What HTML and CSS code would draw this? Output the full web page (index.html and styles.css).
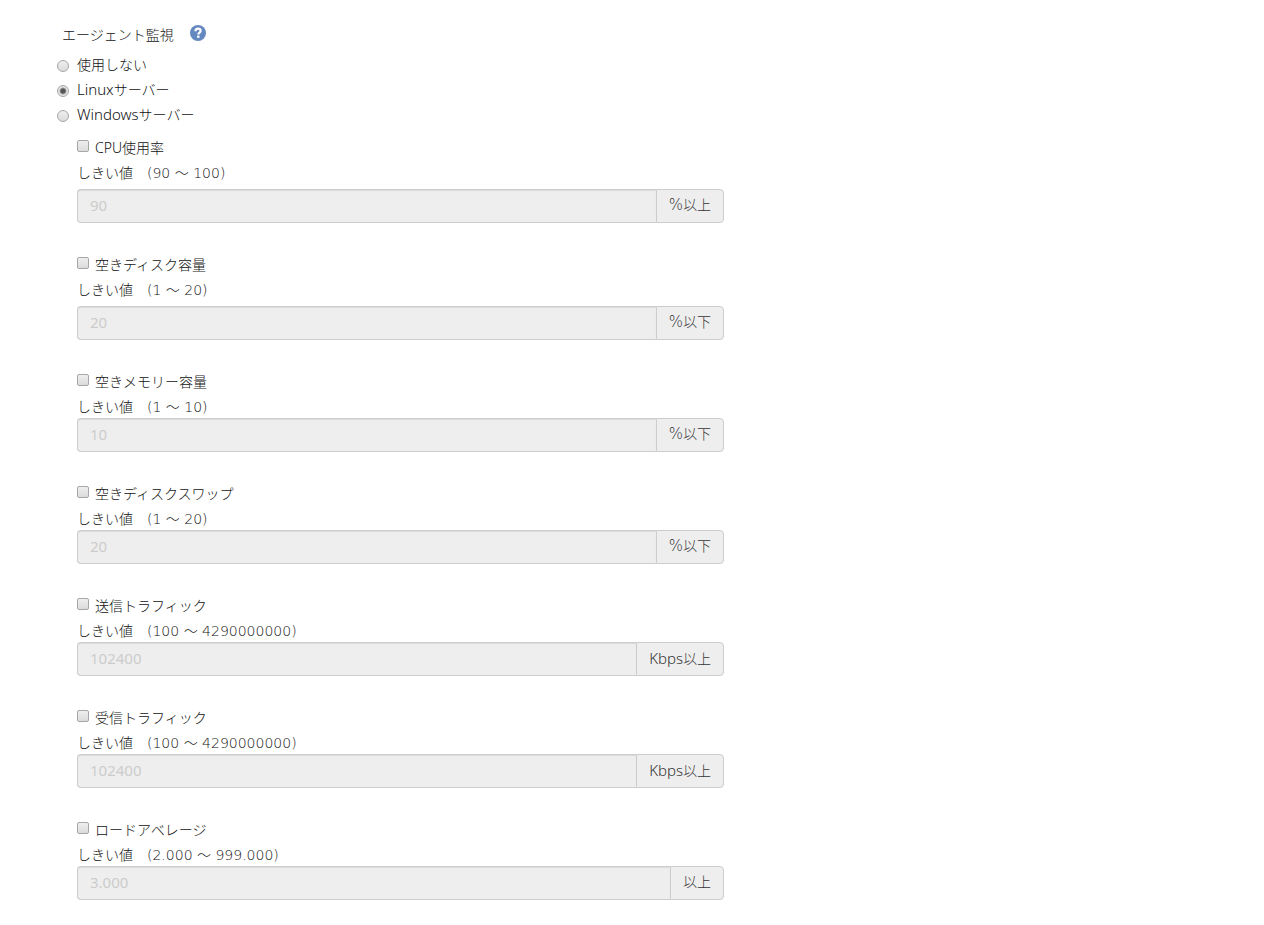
FILE: index.html
```
<!DOCTYPE html>
<html lang="ja">
<head>
    <meta charset="UTF-8">
    <meta name="viewport" content="width=device-width, initial-scale=1.0">
    <title>エージェント監視</title>
    <link rel="stylesheet" href="styles.css">
</head>
<body>
    <form class="agent-form">
        <div class="form-title">
            <span id="agent-title">エージェント監視</span>
            <a href="#help" class="help" aria-label="ヘルプ">
                <svg viewBox="0 0 16 16" width="16" height="16">
                    <circle cx="8" cy="8" r="8" fill="#6488c0"/>
                    <path d="M5.5 6.2C5.5 4.5 6.6 3.7 8.1 3.7S10.6 4.6 10.6 5.9C10.6 7.7 8.3 7.5 8.3 9.6" fill="none" stroke="#fff" stroke-width="2.2"/>
                    <rect x="7.1" y="10.6" width="2.4" height="2.2" fill="#fff"/>
                </svg>
            </a>
        </div>

        <div class="radio-list" role="radiogroup" aria-labelledby="agent-title">
            <label class="radio"><input type="radio" name="agent" value="none">使用しない</label>
            <label class="radio"><input type="radio" name="agent" value="linux" checked><span><span class="en">Linux</span>サーバー</span></label>
            <label class="radio"><input type="radio" name="agent" value="windows"><span><span class="en">Windows</span>サーバー</span></label>
        </div>

        <div class="monitor-list">
            <div class="monitor spaced">
                <label class="check"><input type="checkbox" name="cpu">CPU使用率</label>
                <label class="range" for="cpu-value">しきい値　(90 〜 100)</label>
                <div class="input-group">
                    <input type="text" id="cpu-value" value="90" disabled>
                    <span class="addon"><span class="percent">%</span>以上</span>
                </div>
            </div>

            <div class="monitor spaced">
                <label class="check"><input type="checkbox" name="disk">空きディスク容量</label>
                <label class="range" for="disk-value">しきい値　(1 〜 20)</label>
                <div class="input-group">
                    <input type="text" id="disk-value" value="20" disabled>
                    <span class="addon"><span class="percent">%</span>以下</span>
                </div>
            </div>

            <div class="monitor">
                <label class="check"><input type="checkbox" name="memory">空きメモリー容量</label>
                <label class="range" for="memory-value">しきい値　(1 〜 10)</label>
                <div class="input-group">
                    <input type="text" id="memory-value" value="10" disabled>
                    <span class="addon"><span class="percent">%</span>以下</span>
                </div>
            </div>

            <div class="monitor">
                <label class="check"><input type="checkbox" name="swap">空きディスクスワップ</label>
                <label class="range" for="swap-value">しきい値　(1 〜 20)</label>
                <div class="input-group">
                    <input type="text" id="swap-value" value="20" disabled>
                    <span class="addon"><span class="percent">%</span>以下</span>
                </div>
            </div>

            <div class="monitor">
                <label class="check"><input type="checkbox" name="send">送信トラフィック</label>
                <label class="range" for="send-value">しきい値　(100 〜 4290000000)</label>
                <div class="input-group">
                    <input type="text" id="send-value" value="102400" disabled>
                    <span class="addon"><span class="en">Kbps</span>以上</span>
                </div>
            </div>

            <div class="monitor">
                <label class="check"><input type="checkbox" name="receive">受信トラフィック</label>
                <label class="range" for="receive-value">しきい値　(100 〜 4290000000)</label>
                <div class="input-group">
                    <input type="text" id="receive-value" value="102400" disabled>
                    <span class="addon"><span class="en">Kbps</span>以上</span>
                </div>
            </div>

            <div class="monitor">
                <label class="check"><input type="checkbox" name="load">ロードアベレージ</label>
                <label class="range" for="load-value">しきい値　(2.000 〜 999.000)</label>
                <div class="input-group">
                    <input type="text" id="load-value" value="3.000" disabled>
                    <span class="addon">以上</span>
                </div>
            </div>
        </div>
    </form>
</body>
</html>
```
FILE: styles.css
```
* {
    box-sizing: border-box;
}
body {
    margin: 0;
    font-family: "Noto Sans", "Noto Sans CJK JP", sans-serif;
    font-size: 14px;
    font-weight: 300;
    color: #111;
    background-color: #fff;
}
.en {
    font-size: 15px;
}
.agent-form {
    padding: 20px 20px 0 57px;
}
.form-title {
    display: flex;
    gap: 16px;
    padding-left: 5px;
    line-height: 30px;
}
.help {
    height: 26px;
    display: flex;
    align-items: center;
}
.radio-list {
    display: flex;
    flex-direction: column;
    align-items: flex-start;
    margin-top: 2px;
}
.radio {
    display: flex;
    align-items: center;
    gap: 8px;
    height: 25px;
    line-height: 25px;
}
input[type="radio"],
input[type="checkbox"] {
    appearance: none;
    flex: none;
    width: 12px;
    height: 12px;
    margin: 0;
    border: 1px solid #a6a6a6;
    background: linear-gradient(#eee, #dcdcdc);
}
input[type="radio"] {
    margin-top: 2px;
    border-radius: 50%;
}
input[type="radio"]:checked {
    background: radial-gradient(circle, #555 0, #555 2px, #e6e6e6 4px);
}
input[type="checkbox"] {
    border-radius: 2px;
    margin-bottom: 4px;
}
.monitor-list {
    max-width: 667px;
    margin-top: 6px;
    padding-left: 20px;
}
.monitor {
    display: flex;
    flex-direction: column;
    align-items: flex-start;
    margin-bottom: 27px;
}
.check {
    display: flex;
    align-items: center;
    gap: 6px;
    line-height: 30px;
}
.range {
    font-family: "DejaVu Sans", "Noto Sans CJK JP", sans-serif;
    line-height: 21px;
}
.input-group {
    display: flex;
    width: 100%;
    height: 34px;
}
.spaced .input-group {
    margin-top: 5px;
}
.input-group input {
    flex: 1;
    min-width: 0;
    padding: 5px 12px 7px;
    border: 1px solid #ccc;
    border-right: 0;
    border-radius: 4px 0 0 4px;
    background-color: #eee;
    box-shadow: inset 0 1px 1px rgba(0, 0, 0, 0.08);
    color: #ccc;
    font-family: "Noto Sans", "Noto Sans CJK JP", sans-serif;
    font-size: 15px;
}
.addon {
    padding: 0 12px;
    border: 1px solid #ccc;
    border-radius: 0 4px 4px 0;
    background-color: #eee;
    color: #333;
    line-height: 30px;
}
.percent {
    font-family: "DejaVu Sans", sans-serif;
    font-size: 15px;
}
```
